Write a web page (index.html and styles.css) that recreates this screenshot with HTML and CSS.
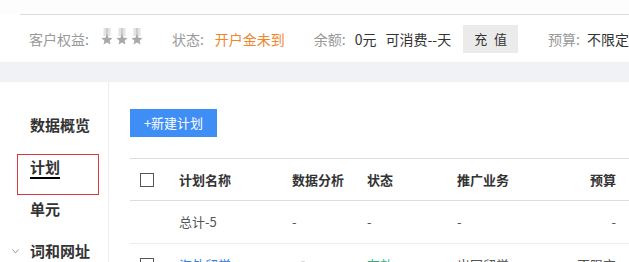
FILE: index.html
```html
<!DOCTYPE html>
<html lang="zh">
<head>
<meta charset="utf-8">
<link rel="stylesheet" href="styles.css">
</head>
<body>
<div class="top-strip"></div>
<div class="top-line"></div>
<div class="info-bar">
  <span class="label">客户权益:</span>
  <span class="medals">
    <svg class="medal" viewBox="0 0 12 17" width="12" height="17"><rect x="2.5" y="0" width="7" height="8" fill="#e2e2e2"/><rect x="5" y="0" width="2" height="8" fill="#cccccc"/><polygon points="6,6 7.6,9.8 11.6,10.1 8.6,12.7 9.5,16.6 6,14.5 2.5,16.6 3.4,12.7 0.4,10.1 4.4,9.8" fill="#a9a9a9"/></svg>
    <svg class="medal" viewBox="0 0 12 17" width="12" height="17"><rect x="2.5" y="0" width="7" height="8" fill="#e2e2e2"/><rect x="5" y="0" width="2" height="8" fill="#cccccc"/><polygon points="6,6 7.6,9.8 11.6,10.1 8.6,12.7 9.5,16.6 6,14.5 2.5,16.6 3.4,12.7 0.4,10.1 4.4,9.8" fill="#a9a9a9"/></svg>
    <svg class="medal" viewBox="0 0 12 17" width="12" height="17"><rect x="2.5" y="0" width="7" height="8" fill="#e2e2e2"/><rect x="5" y="0" width="2" height="8" fill="#cccccc"/><polygon points="6,6 7.6,9.8 11.6,10.1 8.6,12.7 9.5,16.6 6,14.5 2.5,16.6 3.4,12.7 0.4,10.1 4.4,9.8" fill="#a9a9a9"/></svg>
  </span>
  <span class="label status-label">状态:</span>
  <span class="orange">开户金未到</span>
  <span class="label balance-label">余额:</span>
  <span class="value amount">0元</span>
  <span class="value days">可消费--天</span>
  <span class="recharge">充 值</span>
  <span class="label budget-label">预算:</span>
  <span class="value budget">不限定</span>
</div>
<div class="gray-band"></div>
<div class="main">
  <nav class="sidebar">
    <div class="nav-item">数据概览</div>
    <div class="nav-item active"><span class="underline">计划</span></div>
    <div class="nav-item">单元</div>
    <div class="nav-item has-chevron">
      <svg class="chevron" viewBox="0 0 7 5" width="7" height="5"><polyline points="0.5,0.5 3.5,4 6.5,0.5" fill="none" stroke="#999" stroke-width="1"/></svg>
      <span>词和网址</span>
    </div>
  </nav>
  <section class="content">
    <div class="new-btn">+新建计划</div>
    <div class="table">
      <div class="row head">
        <div class="cell c-check"><span class="checkbox"></span></div>
        <div class="cell c-name">计划名称</div>
        <div class="cell c-ana">数据分析</div>
        <div class="cell c-status">状态</div>
        <div class="cell c-biz">推广业务</div>
        <div class="cell c-budget">预算</div>
      </div>
      <div class="row total">
        <div class="cell c-check"></div>
        <div class="cell c-name">总计-5</div>
        <div class="cell c-ana">-</div>
        <div class="cell c-status">-</div>
        <div class="cell c-biz">-</div>
        <div class="cell c-budget">-</div>
      </div>
      <div class="row item">
        <div class="cell c-check"><span class="checkbox"></span></div>
        <div class="cell c-name link">海外留学</div>
        <div class="cell c-ana"><svg class="trend" viewBox="0 0 10 8" width="10" height="8"><polyline points="0.5,7.5 4,4.5 5.5,5.5 9,1.5" fill="none" stroke="#555" stroke-width="1.1"/><polyline points="6.5,1.2 9.2,1.2 9.2,3.8" fill="none" stroke="#555" stroke-width="1.1"/></svg></div>
        <div class="cell c-status green">有效</div>
        <div class="cell c-biz">出国留学</div>
        <div class="cell c-budget">不限定</div>
      </div>
    </div>
  </section>
</div>
</body>
</html>
```

FILE: styles.css
```css
html, body {
  margin: 0;
  padding: 0;
  background: #ffffff;
  font-family: "Noto Sans CJK SC", "Noto Sans", "Liberation Sans", sans-serif;
  overflow: hidden;
  width: 629px;
  height: 262px;
}

.top-strip {
  height: 14px;
  background: #fdfdfd;
}

.top-line {
  height: 1px;
  margin-left: 20px;
  background: #dcdcdc;
}

.info-bar {
  height: 47px;
  background: #ffffff;
  display: flex;
  align-items: center;
  padding-left: 29px;
  font-size: 14px;
  line-height: 20px;
  white-space: nowrap;
}

.label { color: #999999; }
.value { color: #333333; }
.orange { color: #f0862e; margin-left: 11px; }

.medals {
  display: flex;
  gap: 3px;
  margin-left: 12px;
  margin-top: -5px;
}

.status-label { margin-left: 29px; }
.balance-label { margin-left: 29px; }
.amount { margin-left: 9px; }
.days { margin-left: 9px; }
.budget-label { margin-left: 30px; }
.budget { margin-left: 7px; }

.recharge {
  margin-left: 12px;
  width: 58px;
  height: 28px;
  background: #ebebeb;
  color: #333333;
  font-size: 13px;
  line-height: 28px;
  text-align: center;
  letter-spacing: 2px;
  text-indent: 2px;
}

.gray-band {
  height: 20px;
  background: #f0f2f5;
}

.main {
  display: flex;
  height: 180px;
}

.sidebar {
  width: 108px;
  border-right: 1px solid #ededed;
  padding-top: 22px;
  box-sizing: content-box;
  flex: none;
}

.nav-item {
  position: relative;
  padding: 11px 0 11px 30px;
  font-size: 15px;
  line-height: 20px;
  font-weight: 700;
  color: #333333;
  display: flex;
  align-items: center;
}

.nav-item.active::after {
  content: "";
  position: absolute;
  left: 17px;
  top: 8px;
  width: 82px;
  height: 41px;
  border: 1px solid #d9383f;
  box-sizing: border-box;
}

.underline {
  display: inline-block;
  line-height: 20px;
  border-bottom: 2px solid #000000;
  margin-bottom: -2px;
}

.has-chevron { padding-left: 12px; }
.chevron { margin-right: 11px; }

.content {
  flex: 1;
  padding-left: 21px;
  padding-top: 27px;
}

.new-btn {
  width: 87px;
  height: 28px;
  background: #3e8ef6;
  color: #ffffff;
  font-size: 13px;
  line-height: 28px;
  text-align: center;
}

.table {
  margin-top: 21px;
  border-top: 1px solid #dddddd;
}

.row {
  display: grid;
  grid-template-columns: 49px 113px 75px 90px 1fr 70px;
  align-items: center;
  font-size: 13px;
  line-height: 20px;
  color: #555555;
}

.row.head {
  height: 41px;
  border-bottom: 1px solid #dddddd;
  font-weight: 700;
  color: #333333;
}

.row.total {
  height: 42px;
  border-bottom: 1px solid #ececec;
}

.row.item {
  height: 42px;
  color: #555555;
}

.c-check { padding-left: 10px; display: flex; }
.c-budget { text-align: right; padding-right: 13px; }

.checkbox {
  width: 14px;
  height: 14px;
  border: 1px solid #555555;
  box-sizing: border-box;
  background: #ffffff;
}

.link { color: #3a7fe0; }
.green { color: #2db07a; }
.trend { margin-left: 3px; display: block; }
```
